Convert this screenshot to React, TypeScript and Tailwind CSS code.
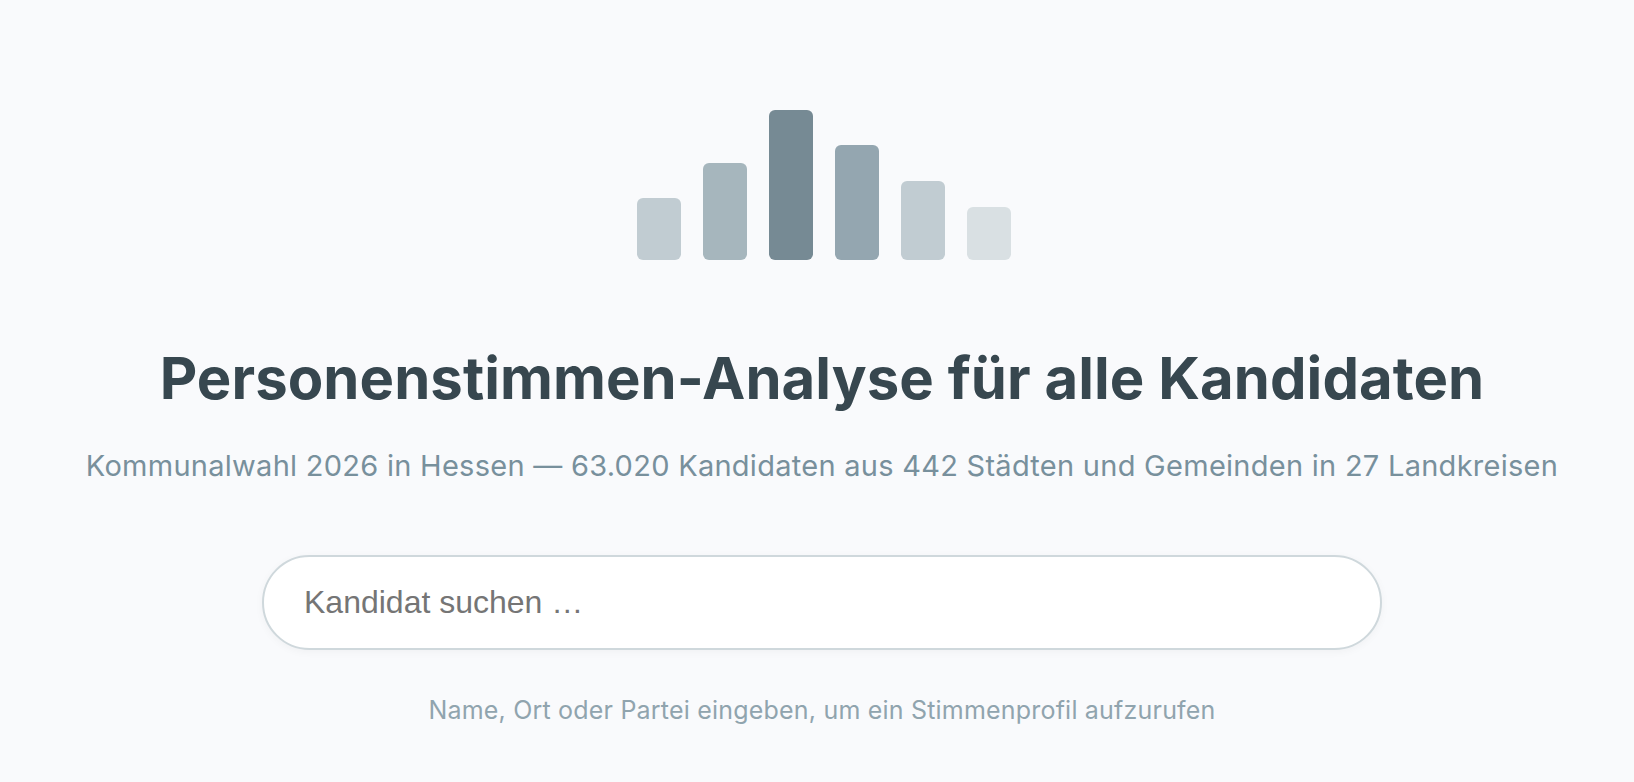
import React from 'react';

const bars = [
  { h: 'h-[62px]', c: 'bg-[#c1ccd2]' },
  { h: 'h-[97px]', c: 'bg-[#a6b6bd]' },
  { h: 'h-[150px]', c: 'bg-[#768a94]' },
  { h: 'h-[115px]', c: 'bg-[#94a6b0]' },
  { h: 'h-[79px]', c: 'bg-[#c1ccd2]' },
  { h: 'h-[53px]', c: 'bg-[#d9e0e3]' },
];

export default function App() {
  return (
    <div className="h-[782px] overflow-hidden bg-[#f9fafc] flex flex-col items-center pt-[110px] pl-[10px] font-['Inter',sans-serif]">
      {/* Logo bars */}
      <div className="flex items-end gap-[22px] h-[150px] ml-[4px]">
        {bars.map((b, i) => (
          <div key={i} className={`w-[44px] rounded-[6px] ${b.h} ${b.c}`} />
        ))}
      </div>

      <h1 className="mt-[82px] text-[58px] leading-[72px] font-bold tracking-[0.07px] text-[#37474f] whitespace-nowrap">
        Personenstimmen-Analyse für alle Kandidaten
      </h1>

      <p className="mt-[32px] text-[29px] leading-[40px] tracking-[0.27px] text-[#78909c] whitespace-nowrap">
        Kommunalwahl 2026 in Hessen — 63.020 Kandidaten aus 442 Städten und Gemeinden in 27 Landkreisen
      </p>

      <input
        type="text"
        placeholder="Kandidat suchen …"
        className="mt-[69px] w-[1120px] h-[95px] shrink-0 rounded-full border-2 border-[#cfd8dc] bg-white pl-[40px] pr-[40px] text-[32px] font-['Liberation_Sans',sans-serif] text-[#37474f] placeholder:text-[#757575] outline-none shadow-[0_2px_8px_rgba(0,0,0,0.04)]"
      />

      <p className="mt-[43px] text-[25px] leading-[34px] tracking-[0.2px] text-[#90a4ae] whitespace-nowrap">
        Name, Ort oder Partei eingeben, um ein Stimmenprofil aufzurufen
      </p>
    </div>
  );
}
